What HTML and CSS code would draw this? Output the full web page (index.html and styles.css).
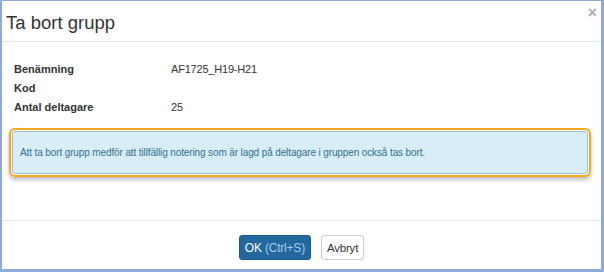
FILE: index.html
```html
<!DOCTYPE html>
<html lang="sv">
<head>
    <meta charset="UTF-8">
    <title>Ta bort grupp</title>
    <link rel="stylesheet" href="styles.css">
</head>
<body>
    <div class="modal-frame">
        <div class="modal-header">
            <h4 class="modal-title">Ta bort grupp</h4>
            <span class="modal-close">&times;</span>
        </div>

        <div class="modal-body">
            <div class="info-list">
                <div class="info-row">
                    <span class="info-label">Benämning</span>
                    <span class="info-value">AF1725_H19-H21</span>
                </div>
                <div class="info-row">
                    <span class="info-label">Kod</span>
                    <span class="info-value"></span>
                </div>
                <div class="info-row">
                    <span class="info-label">Antal deltagare</span>
                    <span class="info-value">25</span>
                </div>
            </div>

            <div class="highlight">
                <div class="alert-info">Att ta bort grupp medför att tillfällig notering som är lagd på deltagare i gruppen också tas bort.</div>
            </div>
        </div>

        <div class="modal-footer">
            <button class="btn btn-primary">OK <span class="shortcut">(Ctrl+S)</span></button>
            <button class="btn btn-default">Avbryt</button>
        </div>
    </div>
</body>
</html>
```

FILE: styles.css
```css
html, body {
    margin: 0;
    padding: 0;
    background: #ffffff;
}

body {
    font-family: "Liberation Sans", Arial, sans-serif;
    color: #333;
}

/* Outer frame */
.modal-frame {
    box-sizing: border-box;
    width: 604px;
    height: 272px;
    border-style: solid;
    border-color: #8eaad8;
    border-width: 1px 3px 3px 2px;
    display: flex;
    flex-direction: column;
}

/* Header */
.modal-header {
    height: 40px;
    border-bottom: 1px solid #e5e5e5;
    display: flex;
    align-items: center;
    justify-content: space-between;
    padding: 0 4px 0 4px;
}

.modal-title {
    margin: 0;
    font-size: 18.5px;
    font-weight: normal;
    color: #333;
    padding-top: 4px;
}

.modal-close {
    align-self: flex-start;
    margin-top: 3px;
    font-size: 16px;
    color: #b0b0b0;
    font-weight: bold;
}

/* Body */
.modal-body {
    flex: 1;
    padding: 17px 10px 0 7px;
}

.info-list {
    padding-left: 5px;
}

.info-row {
    display: flex;
    height: 19px;
    align-items: center;
    font-size: 11px;
}

.info-label {
    width: 157px;
    font-weight: bold;
    color: #333;
}

.info-value {
    color: #333;
    letter-spacing: -0.2px;
}

.highlight {
    margin-top: 12px;
    border: 2px solid #f4a81d;
    border-radius: 6px;
    padding: 1px;
    box-shadow: 0 3px 4px rgba(0, 0, 0, 0.25);
}

.alert-info {
    background: #d9edf7;
    border: 1px solid #9fbfd0;
    border-radius: 3px;
    color: #31708f;
    font-size: 10px;
    letter-spacing: -0.12px;
    padding: 15px 7px 15px 7px;
}

/* Footer */
.modal-footer {
    height: 48px;
    border-top: 1px solid #e5e5e5;
    display: flex;
    justify-content: center;
    align-items: center;
    gap: 10px;
}

.btn {
    font-family: "Liberation Sans", Arial, sans-serif;
    font-size: 12px;
    letter-spacing: -0.2px;
    height: 25px;
    padding: 0 5px;
    border-radius: 3px;
    margin-top: 5px;
}

.btn-primary {
    background: #22679f;
    border: 1px solid #1d5a8a;
    color: #ffffff;
}

.btn-primary .shortcut {
    color: #a9c8e6;
}

.btn-default {
    background: #ffffff;
    border: 1px solid #cccccc;
    color: #333;
    font-size: 11.5px;
}
```
